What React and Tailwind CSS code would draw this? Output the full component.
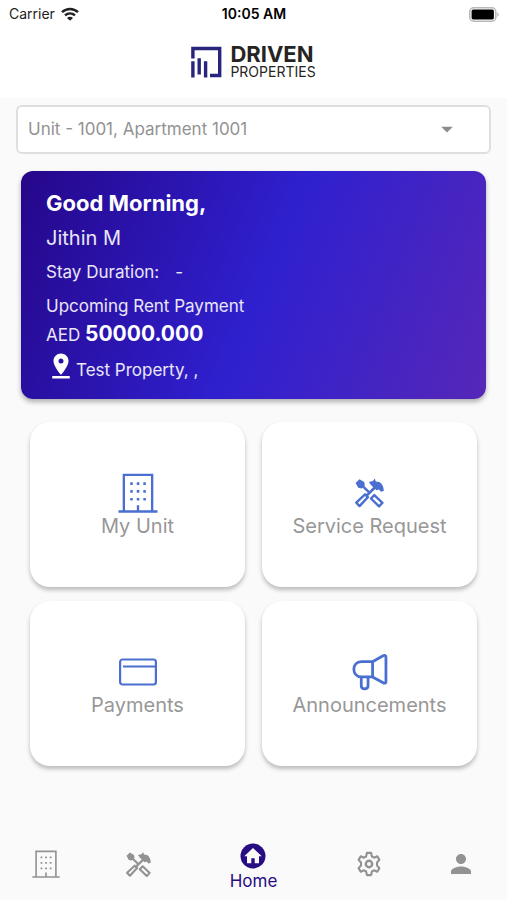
import React, { useState } from 'react';
import { MdArrowDropDown, MdPinDrop, MdPerson } from 'react-icons/md';

const UNITS = ['Unit - 1001, Apartment 1001'];

const BuildingIcon = ({ className }) => (
    <svg viewBox="0 0 40 41" fill="none" stroke="currentColor" strokeWidth="2.4" className={className} aria-hidden="true">
        <path d="M5.500 39V2h29v37M0 39.500h40M20 39v-6" />
        <g fill="currentColor" stroke="none">
            {[9.500, 17.500, 25.500].map((y) => (
                [12, 18.700, 25.400].map((x) => (
                    <rect key={`${x}-${y}`} x={x} y={y} width="2.700" height="2.700" rx="0.500" />
                ))
            ))}
        </g>
    </svg>
);

const ToolsIcon = ({ className }) => (
    <svg viewBox="0 0 30 30" fill="none" stroke="currentColor" className={className} aria-hidden="true">
        {/* Screwdriver */}
        <path d="M0.600 4.600 4.600.7l5 2.900.6 3.300-3.200 3.400-3.600-.7z" fill="currentColor" stroke="none" />
        <path d="M6.500 6.500l8.500 8.200" strokeWidth="2.600" />
        <path d="M20 17.200l8.400 7.900-3.500 3.800-8.400-8.200z" strokeWidth="2.500" strokeLinejoin="round" />
        {/* Hammer */}
        <path d="M22 7.800L11.500 18.200" strokeWidth="2.800" />
        <path d="M10.400 16.400l2.900 2.900-8.600 9.200L1.300 25z" strokeWidth="2.500" strokeLinejoin="round" />
        <path d="M14.300 3.600l4.200-1L20.500 0l1 3.100 3.800.6c2.600 1.800 4.500 5 4.500 9.300l-3 .7-2-2.300-2.600.8-5.400-5.200z" fill="currentColor" stroke="none" />
    </svg>
);

const CardIcon = ({ className }) => (
    <svg viewBox="0 0 38 28" fill="none" stroke="currentColor" strokeWidth="2.200" className={className} aria-hidden="true">
        <rect x="1.100" y="1.500" width="35.800" height="25" rx="2.500" />
        <path d="M4 8.500h33" />
    </svg>
);

const MegaphoneIcon = ({ className }) => (
    <svg viewBox="0 0 35 36" fill="none" stroke="currentColor" strokeWidth="2.700" strokeLinejoin="round" className={className} aria-hidden="true">
        <path d="M20 8H9C4.500 8 1.800 11.300 1.800 15.300S4.500 22.800 9 22.800h11z" />
        <path d="M20 8l10.200-5.800c1.500-.7 2.800-.4 2.800 1.200v24c0 1.500-1.300 1.900-2.700 1.100L20 22.800" />
        <path d="M9 23v8.300c0 4 6.600 4 6.600 0V23" />
    </svg>
);

const HomeIcon = ({ className }) => (
    <svg viewBox="0 0 26 26" className={className} aria-hidden="true">
        <circle cx="13" cy="13" r="12.500" fill="currentColor" />
        <path d="M13 5L4.200 13.300h2.800v6.900h4.300v-5h3.400v5H19v-6.900h2.800z" fill="#fafafa" />
    </svg>
);

const GearIcon = ({ className }) => (
    <svg viewBox="0 0 26 26" fill="none" stroke="currentColor" strokeWidth="2.100" strokeLinejoin="round" className={className} aria-hidden="true">
        <path d="M10.900 1.900h4.200l.8 3.600 2.100 1.200 3.300-1.400 2.100 3.600-2.400 2.600v3l2.400 2.600-2.100 3.600-3.300-1.400-2.100 1.200-.8 3.600h-4.200l-.8-3.600L8 19.300l-3.300 1.400-2.100-3.600L5 14.500v-3L2.600 8.900l2.100-3.600L8 6.700l2.100-1.200z" />
        <circle cx="13" cy="13" r="3.200" strokeWidth="2.400" />
    </svg>
);

const WifiIcon = ({ className }) => (
    <svg viewBox="0 0 18 14" fill="none" stroke="currentColor" strokeWidth="2.500" className={className} aria-hidden="true">
        <path d="M1 5.200c4.600-4.300 11.400-4.300 16 0" />
        <path d="M4 8.400c2.900-2.600 7.100-2.600 10 0" />
        <path d="M9 13.800L6 10.900c1.700-1.500 4.300-1.500 6 0z" fill="currentColor" stroke="none" />
    </svg>
);

const BatteryIcon = ({ className }) => (
    <svg viewBox="0 0 30 15" className={className} aria-hidden="true">
        <rect x="0.800" y="0.800" width="26" height="13.400" rx="4" fill="#fff" stroke="#b9b9b9" strokeWidth="1.600" />
        <rect x="2.600" y="2.600" width="22.300" height="9.800" rx="1.600" fill="#000" />
        <path d="M28.300 5.200c2 .8 2 3.800 0 4.600z" fill="#b9b9b9" />
    </svg>
);

const LogoMark = ({ className }) => (
    <svg viewBox="0 0 31 32" fill="none" stroke="#29257c" strokeWidth="3.400" className={className} aria-hidden="true">
        <path d="M1.900 12.500V2.500h26.800v27H19" />
        <path d="M1.900 15.200V31.500M8.200 12.300V28.500M14.600 15.200V31.500" />
    </svg>
);

const TILES = [
    { label: 'My Unit', icon: <BuildingIcon className="w-10 h-10" /> },
    { label: 'Service Request', icon: <ToolsIcon className="w-[29px] h-10" /> },
    { label: 'Payments', icon: <CardIcon className="w-[38px] h-10" /> },
    { label: 'Announcements', icon: <MegaphoneIcon className="w-9 h-10" /> },
];

const NAV_ITEMS = [
    { name: 'My Unit', icon: <BuildingIcon className="w-7 h-7" /> },
    { name: 'Service Request', icon: <ToolsIcon className="w-[25px] h-[25px]" /> },
    { name: 'Home', icon: <HomeIcon className="w-[26px] h-[26px]" />, active: true },
    { name: 'Settings', icon: <GearIcon className="w-[26px] h-[26px]" /> },
    { name: 'Profile', icon: <MdPerson className="w-[30px] h-[30px]" /> },
];

const App = () => {
    const [unit, setUnit] = useState(UNITS[0]);

    return (
        <div className="flex flex-col min-h-screen bg-[#fafafa] font-['Inter',sans-serif]">
            {/* Status bar and logo */}
            <header className="bg-white pb-[18px]">
                <div className="grid grid-cols-3 items-center h-7 pl-[9px] pr-2 text-sm text-[#222]">
                    <div className="flex items-center gap-[6px]">
                        <span>Carrier</span>
                        <WifiIcon className="w-[18px] h-[14px]" />
                    </div>
                    <span className="text-center font-semibold text-black">10:05 AM</span>
                    <BatteryIcon className="w-[30px] h-[15px] justify-self-end" />
                </div>
                <div className="flex items-center justify-center gap-2 pt-4 h-[52px]">
                    <LogoMark className="w-[31px] h-8" />
                    <div className="text-[#262423]">
                        <p className="text-[22px] leading-5 font-bold">DRIVEN</p>
                        <p className="text-sm leading-4">PROPERTIES</p>
                    </div>
                </div>
            </header>

            <main className="flex-1 px-4 pt-[7px]">
                <div className="relative">
                    <select
                        aria-label="Unit"
                        value={unit}
                        onChange={(e) => setUnit(e.target.value)}
                        className="appearance-none w-full h-[49px] pl-[10px] pr-14 bg-white border-2 border-[#dfdfdf] rounded-md text-[17px] text-[#929292]"
                    >
                        {UNITS.map((u) => (
                            <option key={u} value={u}>{u}</option>
                        ))}
                    </select>
                    <MdArrowDropDown className="absolute right-[30px] top-[10px] w-7 h-7 text-[#8c8c8c] pointer-events-none" />
                </div>

                {/* Greeting card */}
                <section className="mt-[17px] mx-[5px] h-[228px] pt-[19px] pr-5 pl-[25px] rounded-xl bg-[linear-gradient(112deg,#26078a_0%,#2f20cf_52%,#5627b8_100%)] text-white/90 shadow-[0_3px_5px_rgba(0,0,0,0.3)]">
                    <h1 className="text-[22px] leading-[26px] font-bold text-white">Good Morning,</h1>
                    <p className="mt-[9px] text-xl leading-[26px]">Jithin M</p>
                    <p className="mt-2 text-[17px] leading-[26px]">
                        <span>Stay Duration:</span>
                        <span className="ml-4">-</span>
                    </p>
                    <p className="mt-2 text-[17px] leading-[26px]">Upcoming Rent Payment</p>
                    <p className="mt-[2px] text-[17px] leading-[26px]">
                        AED <strong className="text-[21px] font-bold text-white">50000.000</strong>
                    </p>
                    <p className="flex items-end mt-[3px] text-[17px] leading-[22px]">
                        <MdPinDrop className="w-[30px] h-[30px] text-white" />
                        Test Property, ,
                    </p>
                </section>

                <div className="grid grid-cols-2 gap-x-[17px] gap-y-[14px] mt-[23px] mx-[14px]">
                    {TILES.map((tile) => (
                        <button
                            key={tile.label}
                            type="button"
                            className="flex flex-col items-center justify-center h-[165px] pt-[2px] bg-white rounded-[20px] shadow-[0_3px_4px_rgba(0,0,0,0.25)] text-[#4a6fd0] cursor-pointer"
                        >
                            {tile.icon}
                            <span className="text-xl leading-[26px] text-[#979797]">{tile.label}</span>
                        </button>
                    ))}
                </div>
            </main>

            {/* Bottom navigation */}
            <nav className="grid grid-cols-[2fr_2fr_3fr_2fr_2fr] h-[72px]">
                {NAV_ITEMS.map((item) => (
                    <a
                        key={item.name}
                        href="#"
                        aria-label={item.name}
                        className={item.active ? 'flex flex-col items-center justify-center pt-[7px] text-[#280c84]' : 'flex flex-col items-center justify-center text-[#929292]'}
                    >
                        {item.icon}
                        {item.active && <span className="text-[17px] leading-6">{item.name}</span>}
                    </a>
                ))}
            </nav>
        </div>
    );
};

export default App;
